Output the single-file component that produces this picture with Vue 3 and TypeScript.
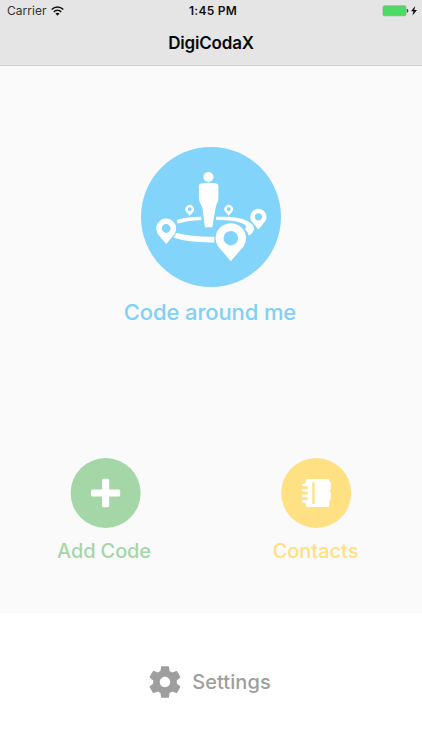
<script setup lang="ts">
interface Pin { x: number; y: number; r: number; hole: number; tip: number }

const pins: Pin[] = [
  { x: 25.2, y: 81.5, r: 10, hole: 4.4, tip: 97 },
  { x: 48.7, y: 62.2, r: 4.3, hole: 1.9, tip: 68.8 },
  { x: 87.7, y: 62.2, r: 4.3, hole: 1.9, tip: 68.8 },
  { x: 117.4, y: 69.8, r: 8.1, hole: 3.6, tip: 82.6 },
  { x: 89.8, y: 91.2, r: 15.2, hole: 7.3, tip: 114.2 },
]

function pinPath(p: Pin): string {
  const { x, y, r, hole, tip } = p
  const sideX = r * 0.86
  const sideY = y + r * 0.52
  return `M${x} ${tip}L${x - sideX} ${sideY}A${r} ${r} 0 1 1 ${x + sideX} ${sideY}Z`
    + `M${x - hole} ${y}a${hole} ${hole} 0 1 0 ${hole * 2} 0a${hole} ${hole} 0 1 0 ${-hole * 2} 0Z`
}
</script>

<template>
  <div class="screen">
    <header class="top">
      <div class="status">
        <div class="carrier">
          <span class="carrier-name">Carrier</span>
          <svg class="wifi" width="13" height="10" viewBox="0 0 13 10">
            <path d="M.7 3.5C4.1.2 8.9.2 12.3 3.5M2.8 5.8c2.1-1.9 5.3-1.9 7.4 0" fill="none" stroke="#111" stroke-width="1.6" />
            <path d="M6.5 9.7 4.5 7.6c1.1-1 2.9-1 4 0z" fill="#111" />
          </svg>
        </div>
        <span class="time">1:45 PM</span>
        <div class="power">
          <svg width="36" height="12" viewBox="0 0 36 12">
            <rect x="1" y=".8" width="23" height="10" rx="1.5" fill="#4cd964" stroke="#8aa78e" stroke-width=".7" />
            <path d="M24.8 4.1h.7q.8 0 .8 1.7t-.8 1.7h-.7z" fill="#444" />
            <path d="M33.2 1 29 6.3h2.4l-.9 4.2 4.5-5.6h-2.7z" fill="#111" />
          </svg>
        </div>
      </div>
      <h1>DigiCodaX</h1>
    </header>

    <main>
      <section class="around">
        <svg class="disc" width="140" height="140" viewBox="0 0 140 140">
          <circle cx="70" cy="70" r="70" fill="#82d4fb" />
          <g fill="#fff" fill-rule="evenodd">
            <circle cx="67.4" cy="30" r="5.1" />
            <path d="M57.9 38.6Q57.9 36.9 60 36.4Q67.5 35.2 75.3 36.4Q77.4 36.9 77.4 38.6V50C77.4 56 75.1 57 74.6 61L71.3 80.2H64L61.5 62C61 58 57.9 56 57.9 50Z" />
            <path d="M35.7 73Q47 69.7 60 69.8L60.6 73Q48 73.2 36.6 76.4Z" />
            <path d="M35.3 86.1Q50 89.9 73.3 89.7V95.4Q48 95.8 32.7 90.8Z" />
            <path d="M75 69.8H86C98 70.1 107 73.1 111.2 77.4C114.4 81 113.3 85.5 107.6 88.6Q106.8 84.6 104 81.9Q106.3 80.2 104 77.8C98 73.9 88 73 75 73Z" />
            <path v-for="pin in pins" :key="pin.x" :d="pinPath(pin)" />
          </g>
        </svg>
        <span class="label blue">Code around me</span>
      </section>

      <div class="pair">
        <section class="item">
          <svg width="71" height="70" viewBox="0 0 71 70">
            <circle cx="35.6" cy="35" r="35" fill="#a5d6a7" />
            <rect x="32" y="20.8" width="7.2" height="28.4" rx="1.6" fill="#fff" />
            <rect x="21" y="31.6" width="29.2" height="7" rx="1.6" fill="#fff" />
          </svg>
          <span class="label green">Add Code</span>
        </section>
        <section class="item">
          <svg width="71" height="70" viewBox="0 0 71 70">
            <circle cx="35.2" cy="35" r="35" fill="#ffe082" />
            <path fill="#fff" d="M26.7 21H46.5Q48.5 21 48.5 23V24H49Q49.8 24 49.8 25V31.5Q49.8 32.4 48.5 32.4V33.6H49Q49.8 33.6 49.8 34.5V41Q49.8 42 48.5 42V47Q48.5 49 46.5 49H26.7Q24.7 49 24.7 47V43H26.8V27H24.7V23Q24.7 21 26.7 21Z" />
            <rect x="31.3" y="24.3" width="2.3" height="21.6" fill="#ffe082" />
            <path d="M22.3 26.9h7.4M22.3 32.4h7.4M22.3 37.9h7.4M22.3 43.4h7.4" stroke="#fff" stroke-width="2.8" stroke-linecap="round" />
          </svg>
          <span class="label yellow">Contacts</span>
        </section>
      </div>
    </main>

    <footer>
      <svg class="gear" width="38" height="38" viewBox="0 0 24 24">
        <path fill="#9e9e9e" d="M19.43 12.98c.04-.32.07-.64.07-.98s-.03-.66-.07-.98l2.11-1.65c.19-.15.24-.42.12-.64l-2-3.46c-.12-.22-.39-.3-.61-.22l-2.49 1c-.52-.4-1.08-.73-1.69-.98l-.38-2.65C14.46 2.18 14.25 2 14 2h-4c-.25 0-.46.18-.49.42l-.38 2.65c-.61.25-1.17.59-1.69.98l-2.49-1c-.23-.09-.49 0-.61.22l-2 3.46c-.13.22-.07.49.12.64l2.11 1.65c-.04.32-.07.65-.07.98s.03.66.07.98l-2.11 1.65c-.19.15-.24.42-.12.64l2 3.46c.12.22.39.3.61.22l2.49-1c.52.4 1.08.73 1.69.98l.38 2.65c.03.24.24.42.49.42h4c.25 0 .46-.18.49-.42l.38-2.65c.61-.25 1.17-.59 1.69-.98l2.49 1c.23.09.49 0 .61-.22l2-3.46c.12-.22.07-.49-.12-.64l-2.11-1.65zM12 15.3c-1.82 0-3.3-1.48-3.3-3.3s1.48-3.3 3.3-3.3 3.3 1.48 3.3 3.3-1.48 3.3-3.3 3.3z" />
      </svg>
      <span class="label gray">Settings</span>
    </footer>
  </div>
</template>

<style>
body { margin: 0; background: #fff; }
</style>

<style scoped>
.screen {
  box-sizing: border-box;
  width: 422px;
  height: 750px;
  display: flex;
  flex-direction: column;
  overflow: hidden;
  font-family: Inter, "Liberation Sans", sans-serif;
  background: #fff;
}
.top {
  box-sizing: border-box;
  height: 66px;
  background: #e5e5e5;
  border-bottom: 1px solid #cfcfcf;
}
.status {
  height: 22px;
  display: grid;
  grid-template-columns: 1fr auto 1fr;
  align-items: center;
  font-size: 12px;
  line-height: 22px;
  color: #111;
}
.carrier { display: flex; align-items: center; gap: 4px; padding-left: 7px; }
.carrier-name { width: 40px; color: #333; letter-spacing: .05px; }
.time { font-weight: 600; letter-spacing: .25px; padding-left: 4px; }
.power { display: flex; justify-content: flex-end; padding-right: 4px; }
h1 {
  margin: 0;
  text-align: center;
  font-size: 17px;
  line-height: 42px;
  font-weight: 600;
  letter-spacing: -.2px;
  color: #0a0a0a;
}
main {
  box-sizing: border-box;
  height: 547px;
  padding-top: 81px;
  background: #fafafa;
  display: flex;
  flex-direction: column;
}
.around { height: 311px; display: flex; flex-direction: column; align-items: center; }
.label { font-weight: 500; white-space: nowrap; }
.around .label { margin: 10px 2px 0 0; font-size: 22px; line-height: 30px; letter-spacing: -.13px; }
.pair { display: grid; grid-template-columns: 1fr 1fr; }
.item { display: flex; flex-direction: column; align-items: center; }
.item .label { margin: 9px 3px 0 0; font-size: 20px; line-height: 28px; letter-spacing: -.14px; }
.item .label.yellow { margin-right: 2px; letter-spacing: -.03px; }
.blue { color: #82d0f5; }
.green { color: #a5d6a7; }
.yellow { color: #ffe082; }
.gray { color: #9e9e9e; font-size: 20px; letter-spacing: .08px; }
footer {
  height: 137px;
  display: flex;
  align-items: center;
  justify-content: center;
  gap: 8px;
  padding-right: 5px;
}
</style>
